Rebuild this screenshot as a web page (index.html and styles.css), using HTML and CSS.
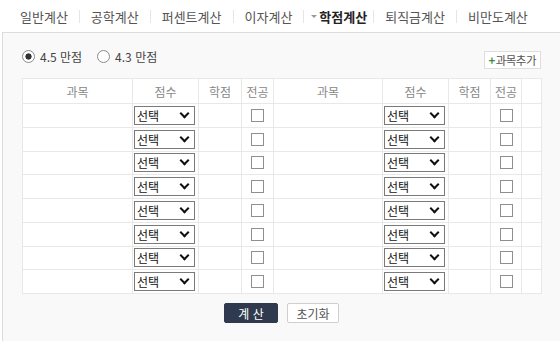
FILE: index.html
```html
<!DOCTYPE html>
<html lang="ko">
<head>
    <meta charset="UTF-8">
    <meta name="viewport" content="width=device-width, initial-scale=1.0">
    <title>학점계산</title>
    <link rel="stylesheet" href="styles.css">
</head>
<body>
    <div class="tabs">
        <div class="tab">일반계산</div>
        <div class="tab">공학계산</div>
        <div class="tab">퍼센트계산</div>
        <div class="tab">이자계산</div>
        <div class="tab active"><span class="caret"></span>학점계산</div>
        <div class="tab">퇴직금계산</div>
        <div class="tab">비만도계산</div>
    </div>

    <div class="panel">
        <div class="options">
            <div class="scale">
                <label class="radio"><input type="radio" name="scale" checked> 4.5 만점</label>
                <label class="radio"><input type="radio" name="scale"> 4.3 만점</label>
            </div>
            <button class="add"><span class="plus">+</span>과목추가</button>
        </div>

        <table class="grades">
            <colgroup>
                <col class="c-name"><col class="c-score"><col class="c-credit"><col class="c-major">
                <col class="c-name2"><col class="c-score"><col class="c-credit2"><col class="c-major2">
                <col class="c-blank">
            </colgroup>
            <thead>
                <tr>
                    <th>과목</th><th>점수</th><th>학점</th><th>전공</th>
                    <th>과목</th><th>점수</th><th>학점</th><th>전공</th>
                    <th></th>
                </tr>
            </thead>
            <tbody id="rows"></tbody>
        </table>

        <div class="actions">
            <button class="btn dark">계 산</button>
            <button class="btn light">초기화</button>
        </div>
    </div>

    <script>
        // build the 8 empty rows (two subjects per row)
        var grades = ['선택', 'A+', 'A0', 'B+', 'B0', 'C+', 'C0', 'D+', 'D0', 'F'];
        var opts = grades.map(function (g) { return '<option>' + g + '</option>'; }).join('');
        var half = '<td></td>' +
            '<td class="score"><span class="sel"><select>' + opts + '</select></span></td>' +
            '<td></td>' +
            '<td class="chk"><input type="checkbox"></td>';
        var html = '';
        for (var i = 0; i < 8; i++) {
            html += '<tr>' + half + half + '<td></td></tr>';
        }
        document.getElementById('rows').innerHTML = html;
    </script>
</body>
</html>
```

FILE: styles.css
```css
body {
    margin: 0;
    font-family: "Noto Sans CJK KR", "Noto Sans", sans-serif;
    font-size: 12px;
    color: #333;
    background: #fff;
}

/* top tab bar */
.tabs {
    display: flex;
    align-items: center;
    height: 32px;
    padding-left: 9px;
}

.tab {
    padding: 0 11px;
    font-size: 13px;
    line-height: 13px;
    color: #555;
    cursor: pointer;
}

.tab + .tab {
    border-left: 1px solid #e6e6e6;
}

.tab.active {
    padding: 0 6px 0 7px;
    font-weight: bold;
    color: #222;
}

.caret {
    display: inline-block;
    vertical-align: middle;
    margin: -2px 2px 0 0;
    border-left: 3px solid transparent;
    border-right: 3px solid transparent;
    border-top: 3px solid #999;
}

/* content panel */
.panel {
    margin-left: 2px;
    border-left: 1px solid #dcdcdc;
    border-top: 1px solid #dcdcdc;
    background: #f9f9f9;
    padding: 0 19px;
    min-height: 308px;
}

.options {
    display: flex;
    justify-content: space-between;
    align-items: flex-start;
    padding-top: 15px;
}

.scale {
    display: flex;
    align-items: center;
    height: 16px;
}

.radio {
    display: flex;
    align-items: center;
    gap: 5px;
    color: #444;
    margin-right: 15px;
}

.radio input {
    appearance: none;
    -webkit-appearance: none;
    width: 13px;
    height: 13px;
    margin: 0;
    border: 1px solid #8a8a8a;
    border-radius: 50%;
    background: #fff;
}

.radio input:checked {
    background: radial-gradient(circle, #333 0 2.8px, #fff 3.4px);
}

.add {
    margin-top: 3px;
    height: 18px;
    padding: 0 4px 0 3px;
    border: 1px solid #dedede;
    background: #fff;
    font-family: inherit;
    font-size: 11.5px;
    color: #555;
    letter-spacing: -0.5px;
    line-height: 16px;
    cursor: pointer;
}

.add .plus {
    color: #3d8f3d;
    font-weight: bold;
    margin-right: 1px;
}

/* grade table */
.grades {
    width: 100%;
    margin-top: 9px;
    border-collapse: collapse;
    table-layout: fixed;
    background: #fff;
}

.grades th,
.grades td {
    border: 1px solid #e8e8e8;
    padding: 0;
}

.grades th {
    height: 24px;
    font-weight: normal;
    color: #888;
}

.grades td {
    height: 22.75px;
}

.c-name { width: 110px; }
.c-name2 { width: 109px; }
.c-score { width: 66px; }
.c-credit { width: 43px; }
.c-credit2 { width: 42px; }
.c-major { width: 32px; }
.c-major2 { width: 31px; }
.c-blank { width: 20px; }

.grades td.score {
    padding-left: 1px;
}

.sel {
    position: relative;
    display: block;
    width: 61px;
    height: 19px;
}

.sel select {
    appearance: none;
    -webkit-appearance: none;
    width: 100%;
    height: 19px;
    margin: 0;
    padding: 0 2px;
    border: 1px solid #7a7a7a;
    border-radius: 0;
    background: #fff;
    font-family: inherit;
    font-size: 12px;
    color: #111;
}

.sel::after {
    content: "";
    position: absolute;
    right: 7px;
    top: 4px;
    width: 5px;
    height: 5px;
    border-right: 2px solid #111;
    border-bottom: 2px solid #111;
    transform: rotate(45deg);
    pointer-events: none;
}

.chk {
    text-align: center;
}

.chk input {
    appearance: none;
    -webkit-appearance: none;
    display: block;
    width: 13px;
    height: 13px;
    margin: 0 auto;
    border: 1px solid #8f8f8f;
    background: #fff;
}

/* bottom buttons */
.actions {
    display: flex;
    justify-content: center;
    gap: 9px;
    margin-top: 9px;
}

.btn {
    height: 20px;
    padding: 0;
    font-family: inherit;
    font-size: 12px;
    border-radius: 2px;
    cursor: pointer;
}

.btn.dark {
    width: 54px;
    background: #2f3a4e;
    border: 1px solid #2f3a4e;
    color: #fff;
}

.btn.light {
    width: 52px;
    background: #fff;
    border: 1px solid #cfcfcf;
    color: #555;
}
```
